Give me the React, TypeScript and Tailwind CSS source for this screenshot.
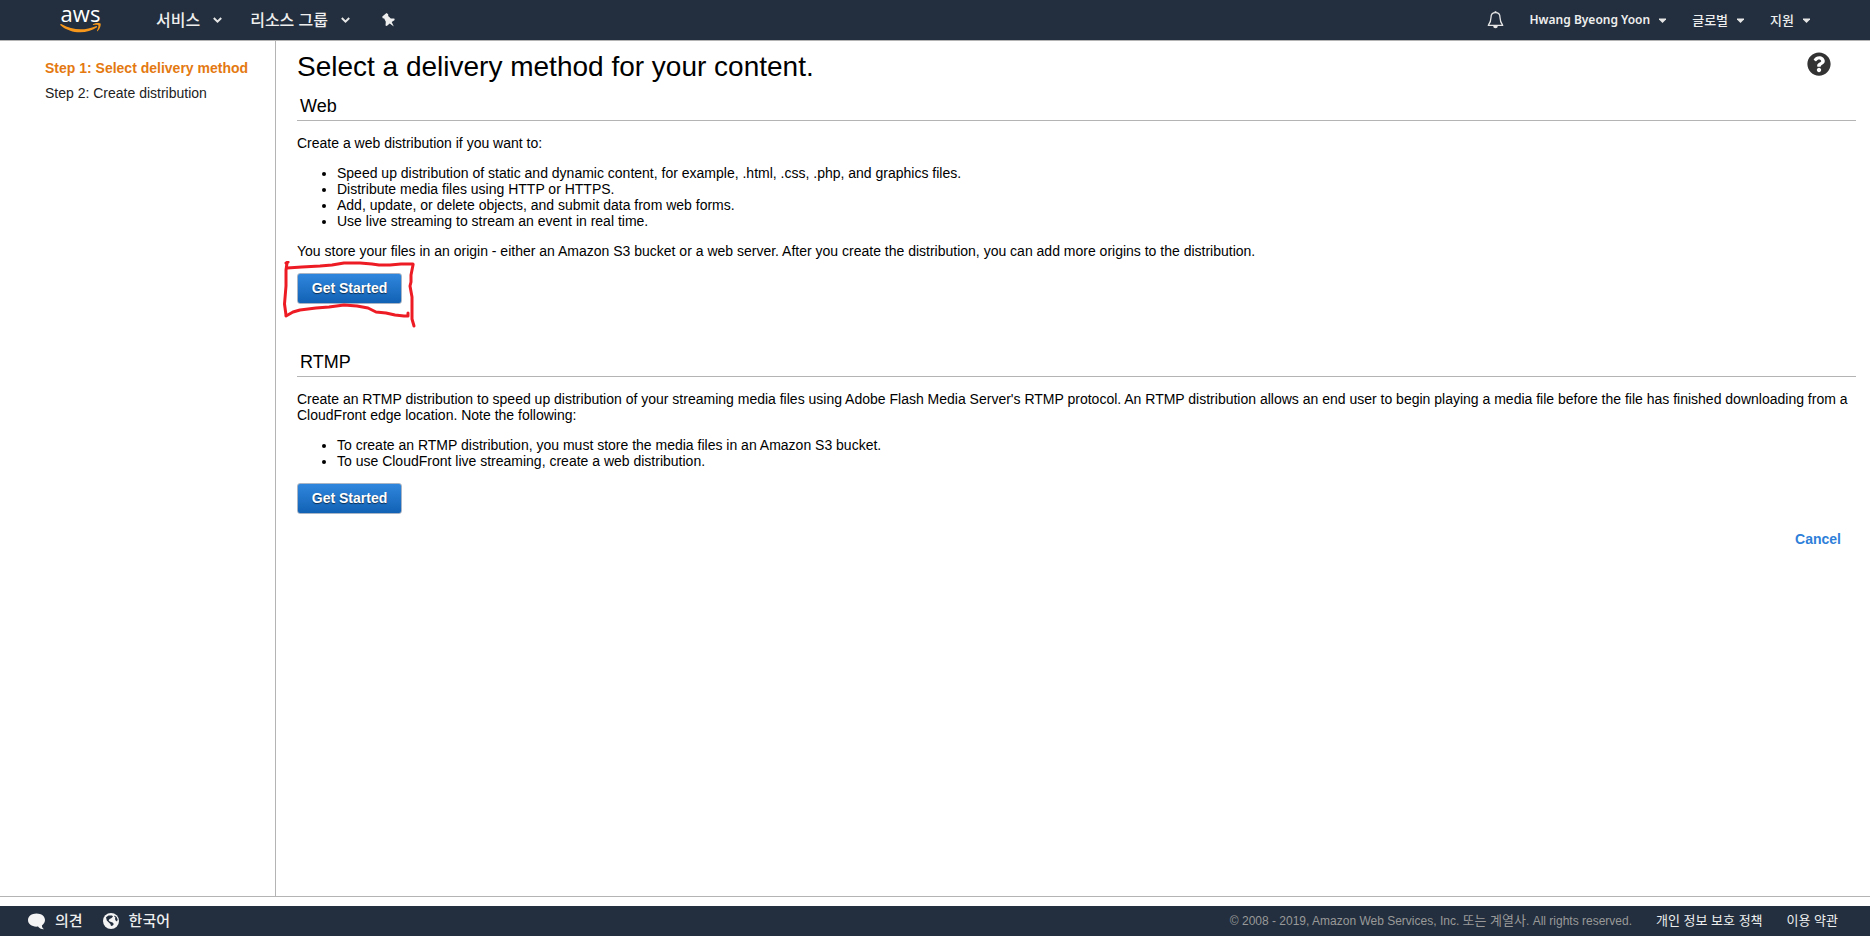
import type { ReactNode } from 'react';
import { FaQuestionCircle } from 'react-icons/fa';

const WEB_ITEMS = [
  'Speed up distribution of static and dynamic content, for example, .html, .css, .php, and graphics files.',
  'Distribute media files using HTTP or HTTPS.',
  'Add, update, or delete objects, and submit data from web forms.',
  'Use live streaming to stream an event in real time.',
];

const RTMP_ITEMS = [
  'To create an RTMP distribution, you must store the media files in an Amazon S3 bucket.',
  'To use CloudFront live streaming, create a web distribution.',
];

function Caret({ small = false }: { small?: boolean }) {
  return small ? (
    <svg width="7" height="5" viewBox="0 0 7 5" fill="#e6e6e6" aria-hidden="true">
      <path d="M0 0.5h7v1L3.5 5 0 1.500z" />
    </svg>
  ) : (
    <svg width="9" height="6" viewBox="0 0 9 6" fill="none" stroke="#e6e6e6" strokeWidth="2" aria-hidden="true">
      <path d="M0.800 1 4.500 4.600 8.200 1" />
    </svg>
  );
}

function AwsLogo() {
  return (
    <a href="#home" className="flex w-[41px] flex-col items-center text-white">
      <span className="h-4 font-['Open_Sans',sans-serif] text-[22px] leading-3 font-medium">aws</span>
      <svg width="41" height="10" viewBox="0 0 41 10" aria-hidden="true">
        <path d="M0.300 1.400C0.700 0.900 1.200 1 1.700 1.300 12.500 7.600 25.500 7.600 35.800 3.200 36.900 2.800 37.600 3.800 36.700 4.500 26.500 11.500 10.500 11 0.500 2.200 0.200 1.900 0.100 1.600 0.300 1.400z" fill="#f7981d" />
        <path d="M33 1.200C35.500 -0.300 39.800 -0.200 40.500 0.600 41.200 1.500 40.200 6 37.700 8.100 37.200 8.500 36.800 8.200 37 7.700 37.800 5.600 38.900 3 38.300 2.300 37.700 1.600 35.200 1.900 33.400 2 32.600 2 32.500 1.500 33 1.200z" fill="#f7981d" />
      </svg>
    </a>
  );
}

function PinIcon() {
  return (
    <svg width="13" height="14" viewBox="0 0 13 14" fill="#eeeeee" aria-hidden="true">
      <path d="M0.300 3.500 4.500 0 6.200 1.300 6.200 3 8.800 5.600 12.300 5.600 12.700 7 9.700 9 11.800 13.500 7.700 10.600 4.800 13 3.500 12.600 3.800 8.700 2.200 5.500 0.600 5.200z" />
    </svg>
  );
}

function BellIcon() {
  return (
    <svg width="17" height="18" viewBox="0 0 17 18" fill="none" stroke="#e6e6e6" aria-hidden="true">
      <path d="M8.500 1.700C5.300 1.700 4 4 4 6.500 4 10.500 3.400 11.500 1.300 14.400H15.700C13.600 11.500 13 10.500 13 6.500 13 4 11.700 1.700 8.500 1.700z" strokeWidth="1.300" strokeLinejoin="round" />
      <path d="M8.500 0.200V2" strokeWidth="1.800" />
      <path d="M6.200 15H10.800A2.300 2.300 0 0 1 6.200 15z" fill="#e6e6e6" stroke="none" />
    </svg>
  );
}

function SpeechIcon() {
  return (
    <svg width="17" height="17" viewBox="0 0 17 17" fill="#f4f4f4" aria-hidden="true">
      <path d="M8.500 0.500C13.500 0.500 17 3.300 17 7.100 17 9.300 15.800 11.200 13.900 12.400 13.900 14.300 14.800 15.300 16 16.200 13.200 16.300 11.200 15.200 10 13.600 4.500 14.300 0 11.400 0 7.100 0 3.300 3.700 0.500 8.500 0.500z" />
    </svg>
  );
}

function GlobeIcon() {
  return (
    <svg width="16" height="16" viewBox="0 0 16 16" aria-hidden="true">
      <circle cx="8" cy="8" r="8" fill="#f4f4f4" />
      <path d="M3 4.200 5.500 2.600 9 2.400 10 3.400 8.600 5 6.600 6 5.600 7.200 6.600 8.600 9.600 9.600 10.800 11 9.800 12.600 8 13 7.400 11 5.600 9.200 3.800 7.600z" fill="#232f3e" />
      <path d="M11.600 2.400 13.600 4 14.700 6.500 14 8.400 12.600 7.600 12 6 12.400 4.600 11.200 3.400z" fill="#232f3e" />
    </svg>
  );
}

function GetStarted() {
  return (
    <button
      type="button"
      className="h-[31px] w-[105px] rounded-[3px] border border-[#a9b5c4] bg-linear-to-b from-[#2f87dd] to-[#1162b5] pb-0.5 text-sm font-bold text-white [text-shadow:0_1px_1px_rgba(0,0,0,0.6)]"
    >
      Get Started
    </button>
  );
}

function Section({ title, intro, items, children }: { title: string; intro: string; items: string[]; children: ReactNode }) {
  return (
    <section>
      <h2 className="border-b border-[#b4b4b4] px-[3px] pt-px pb-[3px] text-lg leading-[21px]">{title}</h2>
      <p className="mt-3.5">{intro}</p>
      <ul className="mt-3.5 list-disc pl-10">
        {items.map((item) => (
          <li key={item}>{item}</li>
        ))}
      </ul>
      {children}
    </section>
  );
}

function Scribble() {
  return (
    <svg
      className="pointer-events-none absolute -top-3 -left-[15px] max-w-none"
      width="136"
      height="68"
      viewBox="0 0 136 68"
      fill="none"
      stroke="#ed1c24"
      strokeWidth="3"
      strokeLinecap="round"
      strokeLinejoin="round"
      aria-hidden="true"
    >
      <path d="M5 2 4 9 4 25 2.500 43 4 54" />
      <path d="M4 2 6 1M5 7 20 6 38 5 50 4 62 2 78 2 90 3 97 4 108 4 119 3 131 3" />
      <path d="M131 4 129 14 129 21 128 25 130 36 130 48 130 58 132 65" />
      <path d="M4 55 11 51 18 49 34 47 47 46 62 44 75 45 86 47 94 51 104 52 113 54 122 55 126 55 126 52" />
    </svg>
  );
}

export default function App() {
  return (
    <div className="flex min-h-screen flex-col bg-white font-['Liberation_Sans','Noto_Sans_CJK_KR',sans-serif] text-sm leading-4 text-black">
      <header className="flex h-[41px] shrink-0 items-center justify-between border-b border-[#b4b4b4] bg-[#232f3e] pr-[60px] pl-[60px] font-['Noto_Sans','Noto_Sans_CJK_KR',sans-serif] font-medium text-[#eeeeee]">
        <nav className="flex items-center">
          <AwsLogo />
          <button type="button" className="ml-[55px] flex items-center gap-[13px] text-base">
            서비스 <Caret />
          </button>
          <button type="button" className="ml-7 flex items-center gap-[13px] text-base">
            리소스 그룹 <Caret />
          </button>
          <button type="button" aria-label="Pin" className="ml-8">
            <PinIcon />
          </button>
        </nav>
        <nav className="flex items-center text-[13px]">
          <button type="button" aria-label="Notifications" className="mr-[26px]">
            <BellIcon />
          </button>
          <button type="button" className="mr-[26px] flex items-center gap-[9px] text-xs font-semibold">
            Hwang Byeong Yoon <Caret small />
          </button>
          <button type="button" className="mr-[26px] flex items-center gap-[9px]">
            글로벌 <Caret small />
          </button>
          <button type="button" className="flex items-center gap-[9px]">
            지원 <Caret small />
          </button>
        </nav>
      </header>

      <div className="mb-[9px] flex grow border-b border-[#b4b4b4]">
        <aside className="w-[276px] shrink-0 border-r border-[#b4b4b4] pt-[19px] pl-[45px]">
          <ol className="flex flex-col gap-[9px]">
            <li className="font-bold text-[#e47911]">Step 1: Select delivery method</li>
            <li className="text-[#222222]">Step 2: Create distribution</li>
          </ol>
        </aside>

        <main className="min-w-0 grow pt-2.5 pr-3.5 pl-[21px]">
          <div className="flex items-start justify-between pr-[25px]">
            <h1 className="text-[28px] leading-8">Select a delivery method for your content.</h1>
            <button type="button" aria-label="Help" className="mt-px text-[#333333]">
              <FaQuestionCircle size={24} />
            </button>
          </div>

          <div className="mt-3">
            <Section title="Web" intro="Create a web distribution if you want to:" items={WEB_ITEMS}>
              <p className="mt-3.5">
                You store your files in an origin - either an Amazon S3 bucket or a web server. After you create the distribution, you
                can add more origins to the distribution.
              </p>
              <div className="relative mt-3.5 flex">
                <GetStarted />
                <Scribble />
              </div>
            </Section>
          </div>

          <div className="mt-[47px]">
            <Section
              title="RTMP"
              intro="Create an RTMP distribution to speed up distribution of your streaming media files using Adobe Flash Media Server's RTMP protocol. An RTMP distribution allows an end user to begin playing a media file before the file has finished downloading from a CloudFront edge location. Note the following:"
              items={RTMP_ITEMS}
            >
              <div className="mt-3.5 flex">
                <GetStarted />
              </div>
            </Section>
          </div>

          <div className="mt-[17px] flex justify-end pr-[15px]">
            <a href="#cancel" className="font-bold text-[#2e7fd9]">
              Cancel
            </a>
          </div>
        </main>
      </div>

      <footer className="flex h-[30px] shrink-0 items-center justify-between bg-[#232f3e] pr-8 pl-7 text-[13px] text-[#eeeeee]">
        <div className="flex items-center gap-5 text-[15px] font-medium">
          <button type="button" className="flex items-center gap-2.5">
            <SpeechIcon /> 의견
          </button>
          <button type="button" className="flex items-center gap-2.5">
            <GlobeIcon /> 한국어
          </button>
        </div>
        <div className="flex items-center gap-6">
          <span className="text-xs text-[#999999]">
            © 2008 - 2019, Amazon Web Services, Inc. <span className="text-[13px]">또는 계열사</span>. All rights reserved.
          </span>
          <a href="#privacy">개인 정보 보호 정책</a>
          <a href="#terms">이용 약관</a>
        </div>
      </footer>
    </div>
  );
}
